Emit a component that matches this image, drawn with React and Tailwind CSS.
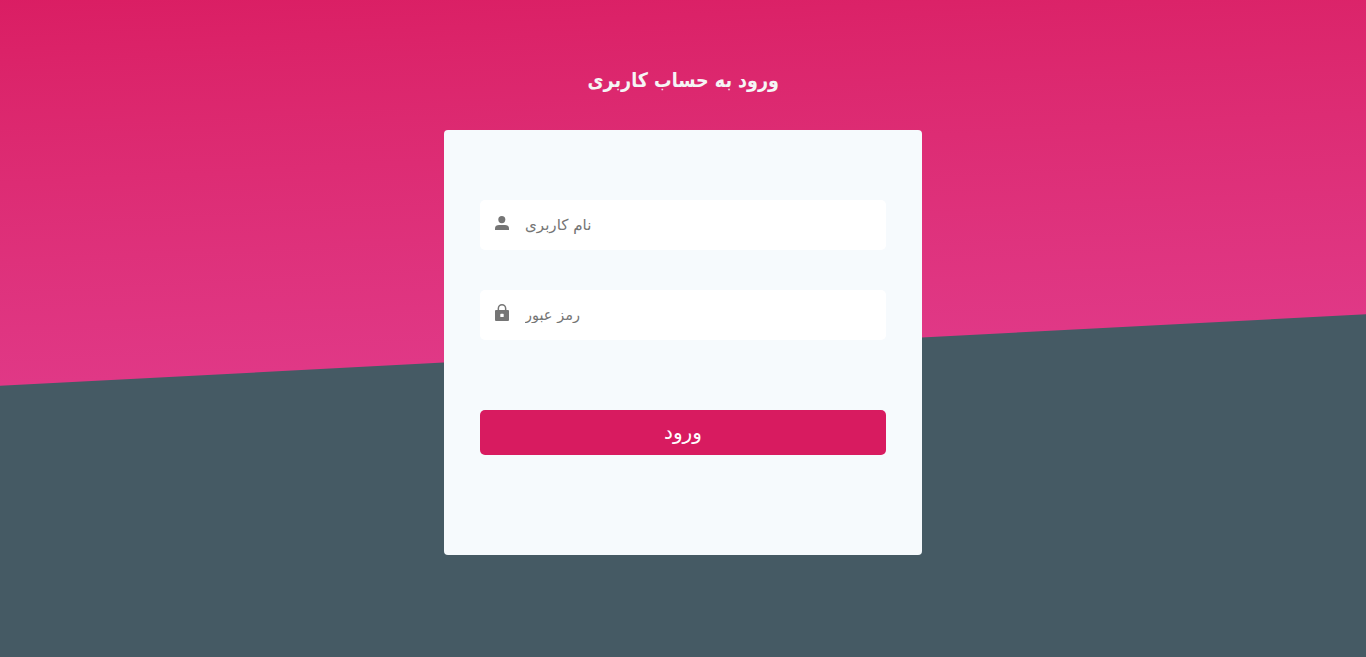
import React from 'react';

function PersonIcon() {
  return (
    <svg className="block h-[18px] w-[14px] shrink-0" viewBox="0 0 14 18" fill="#757575" aria-hidden="true">
      <ellipse cx="6.8" cy="5.6" rx="3.5" ry="3.7" />
      <path d="M0 16V14.2C0 11.8 1.9 11 4 11h6c2.1 0 4 .8 4 3.2V16z" />
    </svg>
  );
}

function LockIcon() {
  return (
    <svg className="block h-[18px] w-[14px] shrink-0" viewBox="0 0 14 18" fill="#757575" aria-hidden="true">
      <path
        fillRule="evenodd"
        d="M13 6H11.4V4.4a4.4 4.4 0 0 0-8.8 0V6H1a1 1 0 0 0-1 1v9a1 1 0 0 0 1 1h12a1 1 0 0 0 1-1V7a1 1 0 0 0-1-1zM4.1 6V4.3a2.9 2.9 0 0 1 5.8 0V6zM5.9 9.8h2.2a.6.6 0 0 1 .6.6v2.1a.6.6 0 0 1-.6.6H5.9a.6.6 0 0 1-.6-.6v-2.1a.6.6 0 0 1 .6-.6z"
      />
    </svg>
  );
}

function Field({ icon, label, type, textSize }) {
  return (
    <label className="flex h-[50px] items-start rounded-[5px] bg-white pl-[15px]">
      <span className="pt-[14px]">{icon}</span>
      <input
        type={type}
        placeholder={label}
        aria-label={label}
        className={`ml-4 h-[50px] min-w-0 flex-1 bg-transparent text-left ${textSize} text-[#757575] outline-none placeholder:text-[#757575]`}
      />
    </label>
  );
}

export default function App() {
  return (
    <main className="relative isolate flex h-[657px] flex-col items-center overflow-hidden bg-[#455a64] font-['DejaVu_Sans',sans-serif]">
      <div className="absolute inset-x-0 -top-[50px] -z-10 h-[400px] -skew-y-3 bg-linear-to-b from-[#da1c62] to-[#e03886]" />
      <h1 dir="rtl" className="mt-[62px] h-[68px] scale-x-[0.876] text-[20px] leading-9 font-bold whitespace-nowrap text-[#f5f5f5]">
        ورود به حساب کاربری
      </h1>
      <form className="flex h-[425px] w-[478px] flex-col rounded bg-[#f6fafd] px-9 pt-[70px]">
        <div className="flex flex-col gap-10">
          <Field icon={<PersonIcon />} label="نام کاربری" type="text" textSize="text-[15.1px]" />
          <Field icon={<LockIcon />} label="رمز عبور" type="password" textSize="text-[14.5px]" />
        </div>
        <button type="button" className="mt-[70px] h-[45px] rounded-[5px] bg-[#d81b60] pb-0.5 text-[20px] text-white">
          ورود
        </button>
      </form>
    </main>
  );
}
